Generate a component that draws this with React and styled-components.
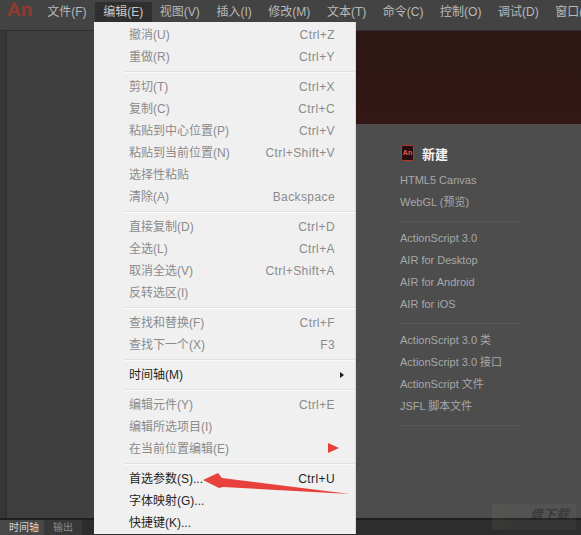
import styled, { createGlobalStyle } from "styled-components";

const Global = createGlobalStyle`
  html, body { margin: 0; padding: 0; background: #4d4d4d; }
  body { font-family: "Liberation Sans", "Noto Sans CJK SC", sans-serif; font-size: 12px; }
`;

const Page = styled.div`
  position: relative;
  width: 581px;
  height: 535px;
  overflow: hidden;
  display: flex;
  flex-direction: column;
  background: #4d4d4d;
`;

const MenuBar = styled.div`
  height: 30px;
  flex: none;
  display: flex;
  align-items: flex-start;
  background: #434343;
  border-bottom: 1px solid #2e2e2e;
  white-space: nowrap;
`;

const Logo = styled.div`
  flex: none;
  width: 32px;
  padding-left: 7px;
  font: bold 19px/20px "Liberation Sans", sans-serif;
  color: #94392f;
`;

const BarItem = styled.div`
  flex: none;
  height: 20px;
  margin-top: 2px;
  padding: 0 8.3px;
  line-height: 20px;
  color: ${(p) => (p.$open ? "#c8c8c8" : "#b9b9b9")};
  background: ${(p) => (p.$open ? "#2f2f2f" : "transparent")};
`;

const Workspace = styled.div`
  flex: 1;
  display: flex;
  min-height: 0;
`;

const LeftStrip = styled.div`
  width: 6px;
  flex: none;
  background: #363636;
  border-right: 1px solid #2f2f2f;
`;

const SidePanel = styled.div`
  width: 120px;
  flex: none;
  background: #3f3f3f;
`;

const Main = styled.div`
  flex: 1;
  display: flex;
  flex-direction: column;
  min-width: 0;
`;

const Banner = styled.div`
  height: 93px;
  flex: none;
  background: linear-gradient(180deg, #2d1816 0%, #331714 100%);
`;

const Content = styled.div`
  flex: 1;
  padding: 20px 0 0 273px;
  background: #4d4d4d;
`;

const Heading = styled.div`
  display: flex;
  align-items: center;
  gap: 8px;
  height: 18px;
  margin-bottom: 7px;
  font-size: 13px;
  font-weight: bold;
  color: #f4f4f4;
`;

const AnBadge = styled.div`
  width: 11px;
  height: 14px;
  margin-left: 1px;
  border: 1px solid #b5342c;
  border-radius: 2px;
  background: #2a0d0d;
  color: #e25a50;
  font: bold 7px/14px "Liberation Sans", sans-serif;
  text-align: center;
`;

const Group = styled.div`
  width: 120px;
  padding-bottom: 8px;
  margin-bottom: 5px;
  border-bottom: 1px solid #575757;
`;

const Link = styled.div`
  height: 22px;
  line-height: 22px;
  color: #a8a8a8;
  font-size: 11px;
  white-space: nowrap;
`;

const TabBar = styled.div`
  height: 15px;
  flex: none;
  display: flex;
  align-items: stretch;
  background: #2d2d2d;
  border-top: 2px solid #1f1f1f;
`;

const Tab = styled.div`
  padding: ${(p) => (p.$active ? "0 5px 0 9px" : "0 9px")};
  font-size: 10px;
  line-height: 15px;
  color: ${(p) => (p.$active ? "#d4d4d4" : "#8c8c8c")};
  background: ${(p) => (p.$active ? "#484848" : "#383838")};
`;

const Watermark = styled.div`
  position: absolute;
  left: 492px;
  top: 504px;
  width: 84px;
  height: 26px;
  box-sizing: border-box;
  padding-left: 38px;
  background: linear-gradient(90deg, rgba(130, 135, 100, 0.14), rgba(130, 130, 125, 0.1) 25%);
  color: rgba(30, 30, 30, 0.45);
  font: italic bold 13px/20px "Noto Sans CJK SC", sans-serif;
  white-space: nowrap;
`;

const Menu = styled.div`
  position: absolute;
  left: 94px;
  top: 22px;
  width: 262px;
  box-sizing: border-box;
  padding-top: 2px;
  background: #f0f0f0;
  border-right: 1px solid #d8d8d8;
`;

const Row = styled.div`
  position: relative;
  height: 22px;
  line-height: 22px;
  display: flex;
  align-items: baseline;
  justify-content: space-between;
  padding: 0 20px 0 35px;
  color: ${(p) => (p.$off ? "#8b8b8b" : "#1f1f1f")};
  white-space: nowrap;
`;

const Shortcut = styled.span`
  letter-spacing: 0.4px;
`;

const Separator = styled.div`
  height: 1px;
  margin: 3px 0 3px 30px;
  background: #e2e2e2;
  border-bottom: 1px solid #fafafa;
`;

const SubArrow = styled.span`
  position: absolute;
  right: 11px;
  top: 8px;
  width: 0;
  height: 0;
  border-left: 4px solid #1a1a1a;
  border-top: 3.5px solid transparent;
  border-bottom: 3.5px solid transparent;
`;

const RedMark = styled.span`
  position: absolute;
  right: 16px;
  top: 5px;
  width: 0;
  height: 0;
  border-left: 11px solid #e8413c;
  border-top: 5.5px solid transparent;
  border-bottom: 5.5px solid transparent;
`;

const Pointer = styled.svg`
  position: absolute;
  left: 200px;
  top: 470px;
`;

const barItems = ["文件(F)", "编辑(E)", "视图(V)", "插入(I)", "修改(M)", "文本(T)", "命令(C)", "控制(O)", "调试(D)", "窗口(W)"];

const menu = [
  [["撤消(U)", "Ctrl+Z", 1], ["重做(R)", "Ctrl+Y", 1]],
  [["剪切(T)", "Ctrl+X", 1], ["复制(C)", "Ctrl+C", 1], ["粘贴到中心位置(P)", "Ctrl+V", 1], ["粘贴到当前位置(N)", "Ctrl+Shift+V", 1], ["选择性粘贴", "", 1], ["清除(A)", "Backspace", 1]],
  [["直接复制(D)", "Ctrl+D", 1], ["全选(L)", "Ctrl+A", 1], ["取消全选(V)", "Ctrl+Shift+A", 1], ["反转选区(I)", "", 1]],
  [["查找和替换(F)", "Ctrl+F", 1], ["查找下一个(X)", "F3", 1]],
  [["时间轴(M)", "", 0, "sub"]],
  [["编辑元件(Y)", "Ctrl+E", 1], ["编辑所选项目(I)", "", 1], ["在当前位置编辑(E)", "", 1, "mark"]],
  [["首选参数(S)...", "Ctrl+U", 0], ["字体映射(G)...", "", 0], ["快捷键(K)...", "", 0]],
];

const groups = [
  ["HTML5 Canvas", "WebGL (预览)"],
  ["ActionScript 3.0", "AIR for Desktop", "AIR for Android", "AIR for iOS"],
  ["ActionScript 3.0 类", "ActionScript 3.0 接口", "ActionScript 文件", "JSFL 脚本文件"],
];

export default function App() {
  return (
    <Page>
      <Global />
      <MenuBar>
        <Logo>An</Logo>
        {barItems.map((t, i) => (
          <BarItem key={t} $open={i === 1}>{t}</BarItem>
        ))}
      </MenuBar>
      <Workspace>
        <LeftStrip />
        <SidePanel />
        <Main>
          <Banner />
          <Content>
            <Heading>
              <AnBadge>An</AnBadge>
              新建
            </Heading>
            {groups.map((g, i) => (
              <Group key={i}>
                {g.map((t) => <Link key={t}>{t}</Link>)}
              </Group>
            ))}
          </Content>
        </Main>
      </Workspace>
      <TabBar>
        <Tab $active>时间轴</Tab>
        <Tab>输出</Tab>
      </TabBar>
      <Watermark>盘下载</Watermark>
      <Menu>
        {menu.map((section, i) => (
          <div key={i}>
            {i > 0 && <Separator />}
            {section.map(([label, key, off, extra]) => (
              <Row key={label} $off={!!off}>
                <span>{label}</span>
                <Shortcut>{key}</Shortcut>
                {extra === "sub" && <SubArrow />}
                {extra === "mark" && <RedMark />}
              </Row>
            ))}
          </div>
        ))}
      </Menu>
      <Pointer width="152" height="28" viewBox="0 0 152 28">
        <path d="M3 10 L18 3 L22 8 L150 24 L23 17 L19 18 Z" fill="#e8413c" />
      </Pointer>
    </Page>
  );
}
